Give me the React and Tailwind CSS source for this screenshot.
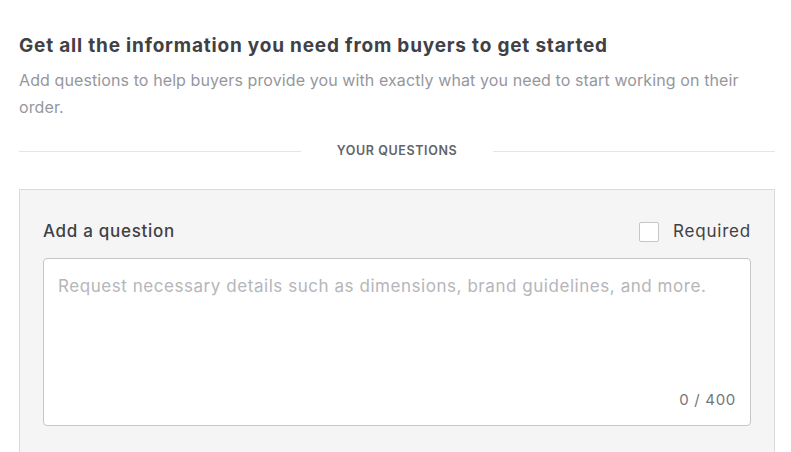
export default function App() {
  return (
    <div className="w-[791px] h-[452px] overflow-hidden bg-white pl-[19px] pr-[16px] pt-[33px]" style={{ fontFamily: 'Inter, "Open Sans", sans-serif' }}>
      <h1 className="text-[19px] leading-[26px] font-bold text-[#404145] tracking-[0.8px] whitespace-nowrap">
        Get all the information you need from buyers to get started
      </h1>
      <p className="mt-[8px] text-[16px] leading-[27px] text-[#95979d] tracking-[0.1px]">
        Add questions to help buyers provide you with exactly what you need to start working on their order.
      </p>
      <div className="mt-[21px] flex items-center">
        <div className="flex-1 h-px bg-[#e4e5e7]" />
        <span className="px-[36px] text-[12.5px] font-semibold text-[#62646a] tracking-[0.6px]">YOUR QUESTIONS</span>
        <div className="flex-1 h-px bg-[#e4e5e7]" />
      </div>
      <div className="mt-[28px] border border-[#dadbdd] bg-[#f5f5f5] px-[23px] pt-[29px] pb-[30px]">
        <div className="flex items-center justify-between">
          <span className="text-[17px] font-medium text-[#404145] tracking-[0.7px]">Add a question</span>
          <label className="flex items-center gap-[14px]">
            <span className="w-[20px] h-[20px] bg-white border border-[#c5c6c9] rounded-[2px]" />
            <span className="text-[17px] text-[#404145] tracking-[0.8px]">Required</span>
          </label>
        </div>
        <div className="mt-[14px] h-[168px] bg-white border border-[#c5c6c9] rounded-[4px] flex flex-col justify-between px-[14px] pt-[15px] pb-[14px]">
          <span className="text-[17px] text-[#b5b6ba] tracking-[0.55px] whitespace-nowrap">Request necessary details such as dimensions, brand guidelines, and more.</span>
          <span className="self-end text-[15px] text-[#74767e] tracking-[0.7px]">0 / 400</span>
        </div>
      </div>
    </div>
  );
}
